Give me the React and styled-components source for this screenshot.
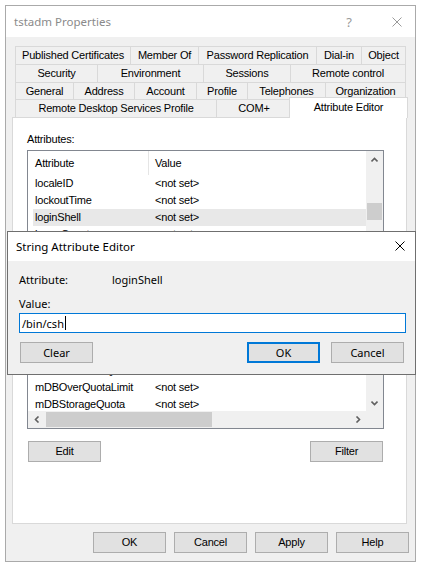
import React from 'react';
import styled, { createGlobalStyle, css } from 'styled-components';

const GlobalStyle = createGlobalStyle`
  html, body { margin: 0; padding: 0; background: #ffffff; }
  body { font-family: "Liberation Sans", Arial, sans-serif; font-size: 11px; }
  * { box-sizing: border-box; }
`;

const msFont = css`
  font-family: "Liberation Sans", Arial, sans-serif;
  font-size: 11px;
  letter-spacing: -0.2px;
  color: #000;
`;

const uiFont = css`
  font-family: "Noto Sans", "Open Sans", sans-serif;
  font-size: 11px;
  color: #000;
`;

const Window = styled.div`
  position: relative;
  margin: 5px 0 0 5px;
  width: 411px;
  height: 557px;
  border: 1px solid #aaaaaa;
  background: #f0f0f0;
  display: flex;
  flex-direction: column;
`;

const TitleBar = styled.div`
  height: 31px;
  flex: none;
  background: #ffffff;
  display: flex;
  align-items: center;
  padding: 0 13px 0 8px;
`;

const Title = styled.div`
  ${uiFont};
  font-size: 11.5px;
  color: ${p => p.$inactive ? '#8a8a8a' : '#000'};
  flex: 1;
`;

const HelpGlyph = styled.div`
  ${uiFont};
  font-size: 13px;
  color: #9a9a9a;
  margin-right: 40px;
`;

const CloseGlyph = styled.svg`
  width: 10px;
  height: 10px;
  display: block;
`;

const Body = styled.div`
  flex: 1;
  padding: 9px 6px 0 6px;
  display: flex;
  flex-direction: column;
`;

const TabStrip = styled.div`
  margin-left: 3px;
  display: flex;
  flex-direction: column;
`;

const TabRow = styled.div`
  display: flex;
  height: ${p => p.$h}px;
`;

const Tab = styled.div`
  ${msFont};
  flex: none;
  width: ${p => p.$w}px;
  height: 100%;
  border-top: 1px solid #d9d9d9;
  border-left: 1px solid #d9d9d9;
  border-right: ${p => p.$last ? '1px solid #d9d9d9' : 'none'};
  display: flex;
  align-items: center;
  justify-content: center;
  white-space: nowrap;
  padding-bottom: 1px;
`;

const SelectedTab = styled(Tab)`
  position: relative;
  z-index: 1;
  background: #ffffff;
  margin-left: -2px;
  margin-top: -2px;
  height: calc(100% + 3px);
  border-right: 1px solid #d9d9d9;
  padding-bottom: 2px;
`;

const Panel = styled.div`
  width: 395px;
  height: 407px;
  flex: none;
  background: #ffffff;
  border: 1px solid #d9d9d9;
  padding: 14px 0 0 14px;
  display: flex;
  flex-direction: column;
`;

const FieldLabel = styled.div`
  ${msFont};
  height: 14px;
  line-height: 14px;
  margin-bottom: 4px;
`;

const ListBox = styled.div`
  width: 357px;
  height: 279px;
  border: 1px solid #828790;
  display: grid;
  grid-template-columns: 1fr 17px;
  grid-template-rows: 1fr 17px;
  background: #fff;
`;

const ListContent = styled.div`
  overflow: hidden;
  display: flex;
  flex-direction: column;
`;

const HeaderRow = styled.div`
  height: 24px;
  flex: none;
  display: flex;
`;

const HeaderCell = styled.div`
  ${msFont};
  width: ${p => p.$w ? `${p.$w}px` : 'auto'};
  flex: ${p => p.$w ? 'none' : '1'};
  border-right: ${p => p.$divider ? '1px solid #e5e5e5' : 'none'};
  padding-left: ${p => p.$pad}px;
  display: flex;
  align-items: center;
`;

const ItemRow = styled.div`
  height: 17px;
  flex: none;
  margin-left: 5px;
  display: flex;
  align-items: center;
  background: ${p => p.$selected ? '#e8e8e8' : 'transparent'};
`;

const ItemCell = styled.div`
  ${msFont};
  width: ${p => p.$w ? `${p.$w}px` : 'auto'};
  flex: ${p => p.$w ? 'none' : '1'};
  padding-left: ${p => p.$pad}px;
  white-space: nowrap;
  line-height: 17px;
`;

const VScroll = styled.div`
  background: #f0f0f0;
  display: flex;
  flex-direction: column;
`;

const HScroll = styled.div`
  background: #f0f0f0;
  display: flex;
  align-items: center;
`;

const ScrollCorner = styled.div`
  background: #f0f0f0;
`;

const ArrowBox = styled.div`
  width: 17px;
  height: 17px;
  flex: none;
  display: flex;
  align-items: center;
  justify-content: center;
`;

const VTrack = styled.div`
  flex: 1;
  display: flex;
  flex-direction: column;
`;

const VThumb = styled.div`
  margin: 35px 1px 0 1px;
  height: 17px;
  background: #cdcdcd;
`;

const HTrack = styled.div`
  flex: 1;
  height: 100%;
  display: flex;
  align-items: center;
`;

const HThumb = styled.div`
  margin-left: 1px;
  width: 166px;
  height: 15px;
  background: #cdcdcd;
`;

const ActionRow = styled.div`
  width: 357px;
  margin-top: 12px;
  padding: 0 1px;
  display: flex;
  justify-content: space-between;
`;

const Button = styled.div`
  ${p => p.$ui ? uiFont : msFont};
  width: 73px;
  height: 21px;
  flex: none;
  background: #e1e1e1;
  border: 1px solid ${p => p.$default ? '#0078d7' : '#adadad'};
  box-shadow: ${p => p.$default ? 'inset 0 0 0 1px #0078d7' : 'none'};
  display: flex;
  align-items: center;
  justify-content: center;
  padding-bottom: 1px;
`;

const Footer = styled.div`
  margin-top: 8px;
  display: flex;
  justify-content: flex-end;
  gap: 8px;
`;

const Dialog = styled.div`
  position: absolute;
  left: 1px;
  top: 225px;
  width: 409px;
  height: 144px;
  border: 1px solid #6f6f6f;
  background: #f0f0f0;
  display: flex;
  flex-direction: column;
  z-index: 5;
`;

const DialogTitleBar = styled.div`
  height: 29px;
  flex: none;
  background: #fff;
  display: flex;
  align-items: center;
  padding: 0 10px 1px 8px;
`;

const DialogBody = styled.div`
  flex: 1;
  padding: 11px 9px 0 11px;
  display: flex;
  flex-direction: column;
`;

const InfoRow = styled.div`
  display: flex;
  height: 14px;
  align-items: center;
`;

const InfoLabel = styled.div`
  ${uiFont};
  width: 93px;
  flex: none;
`;

const InfoValue = styled.div`
  ${uiFont};
`;

const ValueLabel = styled.div`
  ${uiFont};
  height: 14px;
  line-height: 14px;
  margin-top: 11px;
  margin-bottom: 2px;
`;

const TextBox = styled.div`
  ${uiFont};
  height: 20px;
  border: 1px solid #0078d7;
  background: #fff;
  padding-left: 2px;
  display: flex;
  align-items: center;
`;

const Caret = styled.span`
  display: inline-block;
  width: 1px;
  height: 14px;
  background: #000;
  margin-left: 1px;
`;

const DialogButtons = styled.div`
  margin-top: 9px;
  padding: 0 2px 0 1px;
  display: flex;
  align-items: center;
`;

const Spacer = styled.div`
  flex: 1;
`;

const ButtonGroup = styled.div`
  display: flex;
  gap: 11px;
`;

const Chevron = ({ dir }) => {
  const pts = {
    up: '0.5,4.5 3.5,1.5 6.5,4.5',
    down: '0.5,1.5 3.5,4.5 6.5,1.5',
    left: '4.5,0.5 1.5,3.5 4.5,6.5',
    right: '1.5,0.5 4.5,3.5 1.5,6.5',
  }[dir];
  const vertical = dir === 'up' || dir === 'down';
  return (
    <svg width={vertical ? 7 : 6} height={vertical ? 6 : 7} viewBox={vertical ? '0 0 7 6' : '0 0 6 7'}>
      <polyline points={pts} fill="none" stroke="#606060" strokeWidth="1.6" />
    </svg>
  );
};

const XIcon = ({ color }) => (
  <CloseGlyph viewBox="0 0 10 10">
    <path d="M0.5 0.5 L9.5 9.5 M9.5 0.5 L0.5 9.5" stroke={color} strokeWidth="1" fill="none" />
  </CloseGlyph>
);

const tabRows = [
  { h: 18, tabs: [['Published Certificates', 115], ['Member Of', 68], ['Password Replication', 118], ['Dial-in', 45], ['Object', 45]] },
  { h: 18, tabs: [['Security', 82], ['Environment', 106], ['Sessions', 87], ['Remote control', 116]] },
  { h: 17, tabs: [['General', 58], ['Address', 61], ['Account', 62], ['Profile', 51], ['Telephones', 78], ['Organization', 81]] },
];

const attributes = [
  'localeID', 'lockoutTime', 'loginShell', 'logonCount', 'logonHours', 'logonWorkstation',
  'macAddress', 'mail', 'managedObjects', 'manager', 'maxStorage', 'mDBOverHardQuotaLimit',
  'mDBOverQuotaLimit', 'mDBStorageQuota', 'mDBUseDefaults',
];

export default function App() {
  return (
    <>
      <GlobalStyle />
      <Window>
        <TitleBar>
          <Title $inactive>tstadm Properties</Title>
          <HelpGlyph>?</HelpGlyph>
          <XIcon color="#9a9a9a" />
        </TitleBar>
        <Body>
          <TabStrip>
            {tabRows.map((row, i) => (
              <TabRow key={i} $h={row.h}>
                {row.tabs.map(([label, w], j) => (
                  <Tab key={label} $w={w} $last={j === row.tabs.length - 1}>{label}</Tab>
                ))}
              </TabRow>
            ))}
            <TabRow $h={18}>
              <Tab $w={201}>Remote Desktop Services Profile</Tab>
              <Tab $w={75}>COM+</Tab>
              <SelectedTab $w={119}>Attribute Editor</SelectedTab>
            </TabRow>
          </TabStrip>
          <Panel>
            <FieldLabel>Attributes:</FieldLabel>
            <ListBox>
              <ListContent>
                <HeaderRow>
                  <HeaderCell $w={121} $pad={7} $divider>Attribute</HeaderCell>
                  <HeaderCell $pad={6}>Value</HeaderCell>
                </HeaderRow>
                {attributes.map(name => (
                  <ItemRow key={name} $selected={name === 'loginShell'}>
                    <ItemCell $w={122} $pad={2}>{name}</ItemCell>
                    <ItemCell $pad={0}>&lt;not set&gt;</ItemCell>
                  </ItemRow>
                ))}
              </ListContent>
              <VScroll>
                <ArrowBox><Chevron dir="up" /></ArrowBox>
                <VTrack><VThumb /></VTrack>
                <ArrowBox><Chevron dir="down" /></ArrowBox>
              </VScroll>
              <HScroll>
                <ArrowBox><Chevron dir="left" /></ArrowBox>
                <HTrack><HThumb /></HTrack>
                <ArrowBox><Chevron dir="right" /></ArrowBox>
              </HScroll>
              <ScrollCorner />
            </ListBox>
            <ActionRow>
              <Button>Edit</Button>
              <Button>Filter</Button>
            </ActionRow>
          </Panel>
          <Footer>
            <Button>OK</Button>
            <Button>Cancel</Button>
            <Button>Apply</Button>
            <Button>Help</Button>
          </Footer>
        </Body>
        <Dialog>
          <DialogTitleBar>
            <Title>String Attribute Editor</Title>
            <XIcon color="#000" />
          </DialogTitleBar>
          <DialogBody>
            <InfoRow>
              <InfoLabel>Attribute:</InfoLabel>
              <InfoValue>loginShell</InfoValue>
            </InfoRow>
            <ValueLabel>Value:</ValueLabel>
            <TextBox>/bin/csh<Caret /></TextBox>
            <DialogButtons>
              <Button $ui>Clear</Button>
              <Spacer />
              <ButtonGroup>
                <Button $ui $default>OK</Button>
                <Button $ui>Cancel</Button>
              </ButtonGroup>
            </DialogButtons>
          </DialogBody>
        </Dialog>
      </Window>
    </>
  );
}
